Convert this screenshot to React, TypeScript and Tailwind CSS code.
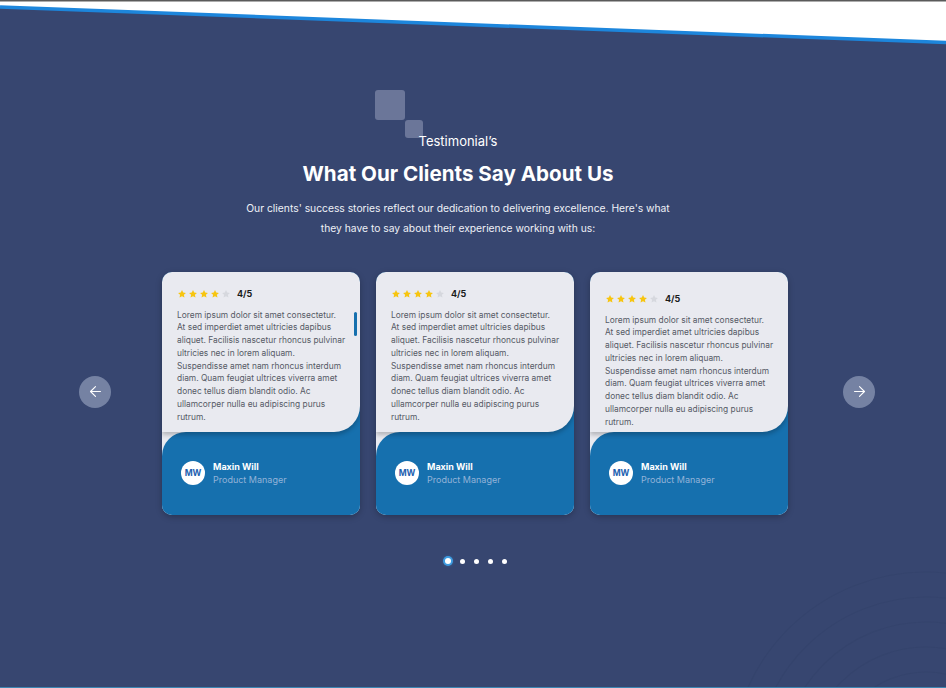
import { ArrowLeft, ArrowRight } from "lucide-react"

const lines = [
    "Lorem ipsum dolor sit amet consectetur.",
    "At sed imperdiet amet ultricies dapibus",
    "aliquet. Facilisis nascetur rhoncus pulvinar",
    "ultricies nec in lorem aliquam.",
    "Suspendisse amet nam rhoncus interdum",
    "diam. Quam feugiat ultrices viverra amet",
    "donec tellus diam blandit odio. Ac",
    "ullamcorper nulla eu adipiscing purus",
    "rutrum.",
]

function Star({ on }: { on: boolean }) {
    return (
        <svg viewBox="0 0 24 24" className="w-[10px] h-[10px]">
            <path
                d="M12 2.5l2.9 6.1 6.6.8-4.9 4.6 1.3 6.6L12 17.3l-5.9 3.3 1.3-6.6-4.9-4.6 6.6-.8z"
                fill={on ? "#f7c510" : "#d6d8de"}
            />
        </svg>
    )
}

function Card({ scroll, lower }: { scroll?: boolean; lower?: boolean }) {
    return (
        <div className="w-[198px] h-[243px] rounded-[10px] overflow-hidden bg-[#1670ae] flex flex-col shadow-[0_2px_6px_rgba(0,0,0,0.25)]">
            <div
                className={
                    "relative z-10 h-[160px] shrink-0 bg-[#e9eaf0] rounded-br-[26px] shadow-[0_3px_4px_rgba(0,0,0,0.22)] pl-[15px] pr-[8px] " +
                    (lower ? "pt-[21px]" : "pt-[16px]")
                }
            >
                <div className="flex items-center h-[12px]">
                    <div className="flex gap-[1px]">
                        <Star on />
                        <Star on />
                        <Star on />
                        <Star on />
                        <Star on={false} />
                    </div>
                    <span className="ml-[6px] text-[9px] font-bold text-[#1b1b1b]">4/5</span>
                </div>
                <div className="mt-[8.5px] text-[8.4px] leading-[12.75px] text-[#565a66]">
                    {lines.map((l) => (
                        <div key={l} className="whitespace-nowrap">
                            {l}
                        </div>
                    ))}
                </div>
                {scroll && (
                    <div className="absolute right-[3px] top-[40px] w-[3px] h-[24px] rounded-full bg-[#1670ae]" />
                )}
            </div>
            <div className="flex-1 bg-[#e9eaf0]">
                <div className="h-full bg-[#1670ae] rounded-tl-[24px] flex items-start pl-[19px] pt-[29px]">
                    <div className="w-[24px] h-[24px] rounded-full bg-white flex items-center justify-center text-[8.5px] font-bold text-[#1d5fb0]">
                        MW
                    </div>
                    <div className="ml-[8px] mt-[-1px]">
                        <div className="text-[9px] leading-[13px] font-bold text-white">Maxin Will</div>
                        <div className="text-[9px] leading-[13px] text-[#93b3d8]">Product Manager</div>
                    </div>
                </div>
            </div>
        </div>
    )
}

export default function App() {
    return (
        <div className="relative w-full h-[688px] overflow-hidden bg-[#374670] border-b border-[#3d86b2] font-['Inter',sans-serif]">
            <svg className="absolute top-0 left-0 w-[946px] h-[50px]" viewBox="0 0 946 50">
                <polygon points="0,0 946,0 946,42 0,7" fill="#ffffff" />
                <line x1="0" y1="7" x2="946" y2="42.5" stroke="#1d86dc" strokeWidth="3.5" />
                <rect x="0" y="0" width="946" height="1.5" fill="#5a5a5a" />
            </svg>
            <svg className="absolute right-0 bottom-0 w-[260px] h-[150px]" viewBox="0 0 260 150">
                {[70, 95, 120, 145, 170, 195].map((r) => (
                    <circle key={r} cx="240" cy="230" r={r} fill="none" stroke="rgba(20,30,60,0.05)" strokeWidth="1.2" />
                ))}
            </svg>

            <div className="relative flex flex-col items-center pt-[134px]">
                <div className="relative mr-[30px]">
                    <div className="absolute left-[-44px] top-[-44px] w-[30px] h-[30px] rounded-[3px] bg-[#6b7699]" />
                    <div className="absolute left-[-14px] top-[-14px] w-[18px] h-[18px] rounded-[3px] bg-[#6b7699]" />
                    <div className="relative text-[13px] leading-[14px] text-white">Testimonial’s</div>
                </div>
                <h1 className="mt-[12px] mr-[30px] text-[20.6px] leading-[28px] font-bold text-white">
                    What Our Clients Say About Us
                </h1>
                <p className="mt-[10px] mr-[30px] text-[10.3px] leading-[20px] text-[#eef0f6] text-center">
                    Our clients' success stories reflect our dedication to delivering excellence. Here's what
                    <br />
                    they have to say about their experience working with us:
                </p>

                <div className="mt-[34px] w-full flex items-center pl-[79px]">
                    <button className="mb-[4px] w-[32px] h-[32px] rounded-full bg-[#7582a3] flex items-center justify-center text-white">
                        <ArrowLeft size={17} strokeWidth={1.6} />
                    </button>
                    <div className="ml-[51px] flex gap-[16px]">
                        <Card scroll />
                        <Card />
                        <Card lower />
                    </div>
                    <button className="mb-[4px] ml-[55px] w-[32px] h-[32px] rounded-full bg-[#7582a3] flex items-center justify-center text-white">
                        <ArrowRight size={17} strokeWidth={1.6} />
                    </button>
                </div>

                <div className="mt-[41px] ml-[6px] h-[10px] flex items-center gap-[9px]">
                    <div className="w-[6px] h-[6px] rounded-full bg-white ring-[2px] ring-[#3d9be0] shadow-[0_0_4px_#3d9be0]" />
                    <div className="w-[5px] h-[5px] rounded-full bg-white" />
                    <div className="w-[5px] h-[5px] rounded-full bg-white" />
                    <div className="w-[5px] h-[5px] rounded-full bg-white" />
                    <div className="w-[5px] h-[5px] rounded-full bg-white" />
                </div>
            </div>
        </div>
    )
}
